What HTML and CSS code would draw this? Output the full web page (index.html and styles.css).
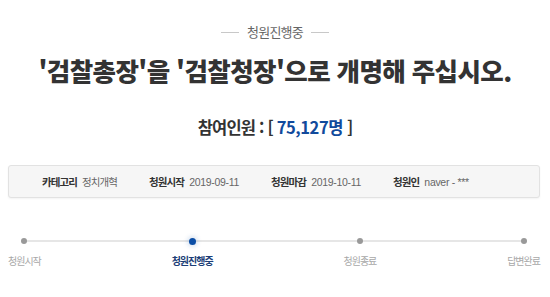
FILE: index.html
```html
<!DOCTYPE html>
<html lang="ko">
<head>
    <meta charset="UTF-8">
    <title>청원진행중</title>
    <link rel="stylesheet" href="styles.css">
</head>
<body>
    <div class="petition">
        <div class="status"><span class="rule"></span>청원진행중<span class="rule"></span></div>
        <h1 class="title">'검찰총장'을 '검찰청장'으로 개명해 주십시오.</h1>
        <h2 class="count">참여인원 : [ <span class="num">75,127명</span> ]</h2>
        <ul class="info">
            <li><strong>카테고리</strong><span>정치개혁</span></li>
            <li><strong>청원시작</strong><span class="date">2019-09-11</span></li>
            <li><strong>청원마감</strong><span class="date">2019-10-11</span></li>
            <li><strong>청원인</strong><span class="date">naver - ***</span></li>
        </ul>
        <ol class="steps">
            <li><i class="dot"></i>청원시작</li>
            <li class="on"><i class="dot"></i>청원진행중</li>
            <li><i class="dot"></i>청원종료</li>
            <li><i class="dot"></i>답변완료</li>
        </ol>
    </div>
</body>
</html>
```

FILE: styles.css
```css
body {
    margin: 0;
    background: #fff;
    font-family: "Noto Sans CJK KR", "Noto Sans", sans-serif;
    color: #333;
}
.petition {
    padding: 24px 0 0;
}
.status {
    display: flex;
    justify-content: center;
    align-items: center;
    gap: 8px;
    font-size: 13px;
    line-height: 16px;
    letter-spacing: -0.8px;
    color: #666;
}
.rule {
    width: 18px;
    height: 1px;
    background: #c8c8c8;
}
.title {
    margin: 15px 0 0;
    text-align: center;
    font-size: 25.5px;
    line-height: 30px;
    font-weight: 900;
    letter-spacing: -0.6px;
    color: #333;
}
.count {
    margin: 32px 0 0;
    text-align: center;
    font-size: 16.5px;
    line-height: 20px;
    font-weight: bold;
    letter-spacing: -0.8px;
    color: #333;
}
.count .num {
    color: #114a9c;
    letter-spacing: -0.4px;
}
.info {
    list-style: none;
    margin: 28px 10px 0 8px;
    padding: 0 0 0 33px;
    height: 31px;
    display: flex;
    align-items: center;
    gap: 32px;
    background: #f6f6f6;
    border: 1px solid #e2e2e2;
    border-radius: 3px;
    box-shadow: 0 1px 2px rgba(0, 0, 0, 0.05);
    font-size: 10.5px;
}
.info li {
    display: flex;
    align-items: center;
    gap: 5px;
}
.info strong {
    color: #333;
    letter-spacing: -0.9px;
}
.info span {
    color: #666;
    letter-spacing: -0.9px;
}
.info .date {
    font-family: "Liberation Sans", Arial, sans-serif;
    font-size: 10.5px;
    letter-spacing: -0.3px;
}
.steps {
    position: relative;
    list-style: none;
    margin: 40px 0 0;
    padding: 0 10px 0 8px;
    display: flex;
    justify-content: space-between;
}
.steps::before {
    content: "";
    position: absolute;
    left: 25px;
    right: 28px;
    top: 2px;
    height: 2px;
    background: #e6e6e6;
}
.steps li {
    position: relative;
    display: flex;
    flex-direction: column;
    align-items: center;
    gap: 10px;
    font-size: 10px;
    line-height: 14px;
    letter-spacing: -1px;
    color: #a8a8a8;
}
.dot {
    width: 6px;
    height: 6px;
    border-radius: 50%;
    background: #999;
}
.steps .on {
    color: #1d3f78;
    font-weight: bold;
}
.steps .on .dot {
    width: 7px;
    height: 7px;
    margin-top: -0.5px;
    margin-bottom: -1px;
    background: #0b4ea6;
    box-shadow: 0 0 4px 2px rgba(11, 78, 166, 0.15);
}
```
